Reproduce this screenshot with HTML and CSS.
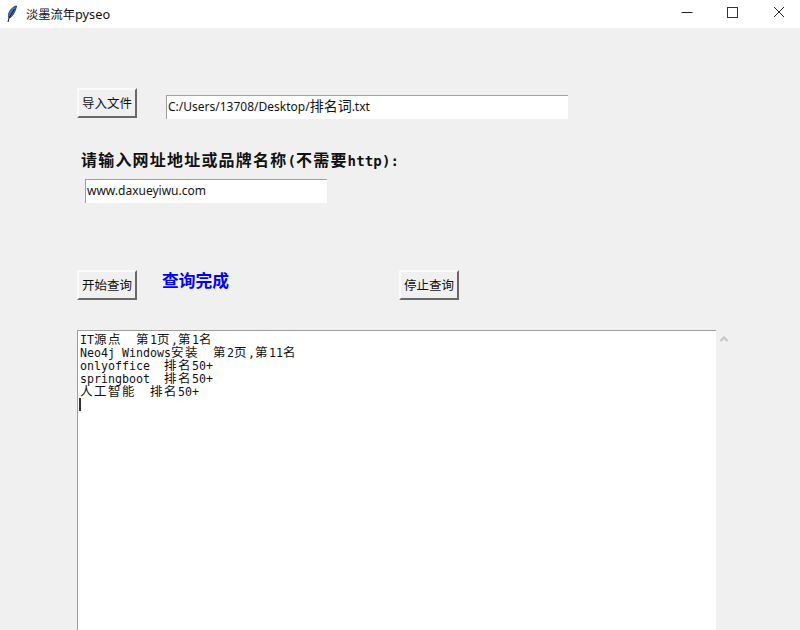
FILE: index.html
```html
<!DOCTYPE html>
<html lang="zh">
<head>
<meta charset="utf-8">
<title>淡墨流年pyseo</title>
<link rel="stylesheet" href="styles.css">
</head>
<body>
<div class="window">
  <header class="titlebar">
    <svg class="feather" width="12" height="18" viewBox="0 0 12 18">
      <path d="M10.500 1C7 1.500 3.500 5 2.500 9.500C2.200 11 2.500 12.500 3.200 13C6 12.500 9.500 7 10.500 1Z" fill="#3f77c4" stroke="#17233a" stroke-width=".8"/>
      <path d="M8.500 4L3 13L2 17" fill="none" stroke="#111" stroke-width="1"/>
    </svg>
    <span class="title">淡墨流年<span class="title-latin">pyseo</span></span>
    <div class="controls">
      <span class="ctl"><svg width="12" height="12" viewBox="0 0 12 12"><path d="M0.500 6.500H11.500" stroke="#222" fill="none"/></svg></span>
      <span class="ctl"><svg width="12" height="12" viewBox="0 0 12 12"><rect x="0.500" y="1.500" width="10" height="10" stroke="#333" fill="none"/></svg></span>
      <span class="ctl"><svg width="12" height="12" viewBox="0 0 12 12"><path d="M1 1L11 11M11 1L1 11" stroke="#222" fill="none"/></svg></span>
    </div>
  </header>
  <main class="content">
    <div class="row file-row">
      <button class="btn">导入文件</button>
      <div class="entry entry-path">C:/Users/13708/Desktop/<span class="entry-cjk">排名词</span>.txt</div>
    </div>
    <div class="prompt">请输入网址地址或品牌名称<span class="mono">(</span>不需要<span class="mono">http):</span></div>
    <div class="entry entry-site">www.daxueyiwu.com</div>
    <div class="row action-row">
      <button class="btn">开始查询</button>
      <div class="status">查询完成</div>
      <button class="btn">停止查询</button>
    </div>
    <div class="output-row">
      <div class="output">
        <div class="line">IT<span class="cjk">源点</span>  <span class="cjk">第</span>1<span class="cjk">页</span>,<span class="cjk">第</span>1<span class="cjk">名</span></div>
        <div class="line">Neo4j Windows<span class="cjk">安装</span>  <span class="cjk">第</span>2<span class="cjk">页</span>,<span class="cjk">第</span>11<span class="cjk">名</span></div>
        <div class="line">onlyoffice  <span class="cjk">排名</span>50+</div>
        <div class="line">springboot  <span class="cjk">排名</span>50+</div>
        <div class="line"><span class="cjk">人工智能</span>  <span class="cjk">排名</span>50+</div>
        <div class="caret"></div>
      </div>
      <svg class="scroll-up" width="10" height="8" viewBox="0 0 10 8"><path d="M1.500 6L5 2.500L8.500 6" fill="none" stroke="#c4c4c4" stroke-width="2"/></svg>
    </div>
  </main>
</div>
</body>
</html>
```
FILE: styles.css
```css
* { box-sizing: border-box; }
html, body { margin: 0; padding: 0; height: 630px; overflow: hidden; }
body { background: #f0f0f0; font-family: "Noto Sans CJK SC", "Noto Sans", sans-serif; color: #000; }
.window { display: flex; flex-direction: column; height: 630px; overflow: hidden; }
.titlebar { flex: none; height: 28px; background: #fff; display: flex; align-items: center; padding-left: 6px; font-size: 12.250px; color: #111; }
.feather { flex: none; }
.title { margin-left: 8px; font-family: "Noto Sans CJK SC", sans-serif; }
.title-latin { font: 12.750px "Noto Sans", sans-serif; }
.controls { margin-left: auto; margin-right: -2px; display: flex; }
.ctl { width: 46px; height: 28px; display: flex; align-items: center; justify-content: center; }
.ctl svg { margin-top: -4px; }
.content { padding: 60px 0 0 77px; flex: 1; min-height: 0; }
.row { display: flex; }
.btn { width: 60px; height: 30px; padding: 0 0 2px; background: #f0f0f0; font: 12.500px "Noto Sans CJK SC", sans-serif; color: #111; border: 2px solid; border-color: #fafafa #696969 #696969 #fafafa; display: flex; align-items: center; justify-content: center; }
.entry { background: #fff; border-top: 1px solid #a0a0a0; border-left: 1px solid #a0a0a0; height: 24px; font: 12px/21px "Noto Sans", "Noto Sans CJK SC", sans-serif; color: #111; white-space: nowrap; padding-left: 1px; }
.entry-cjk { font: 14px/0 "Noto Sans CJK SC", sans-serif; }
.entry-path { width: 402px; margin: 7px 0 0 29px; }
.prompt { margin: 31px 0 0 4px; height: 19px; font: bold 16px/19px "Noto Sans CJK SC", sans-serif; letter-spacing: 1.200px; white-space: nowrap; color: #111; }
.mono { font: bold 14.100px/19px "DejaVu Sans Mono", monospace; letter-spacing: 0.100px; }
.entry-site { width: 242px; margin: 10px 0 0 8px; }
.action-row { margin-top: 67px; align-items: flex-start; }
.status { width: 237px; margin-left: 25px; font: bold 16.750px/20px "Noto Sans CJK SC", sans-serif; color: #0000ff; }
.output-row { margin-top: 30px; display: flex; align-items: flex-start; }
.output { width: 639px; height: 320px; flex: none; background: #fff; border-top: 1px solid #a0a0a0; border-left: 1px solid #a0a0a0; font: 11.630px/13px "DejaVu Sans Mono", monospace; color: #111; padding-top: 3px; }
.line { height: 13px; margin-left: 2px; white-space: pre; }
.cjk { font: 12.500px/0 "Noto Sans CJK SC", sans-serif; letter-spacing: 1.500px; }
.caret { width: 2px; height: 13px; margin: -1px 0 0 1px; background: #333; }
.scroll-up { flex: none; margin: 5px 0 0 3px; }
```
